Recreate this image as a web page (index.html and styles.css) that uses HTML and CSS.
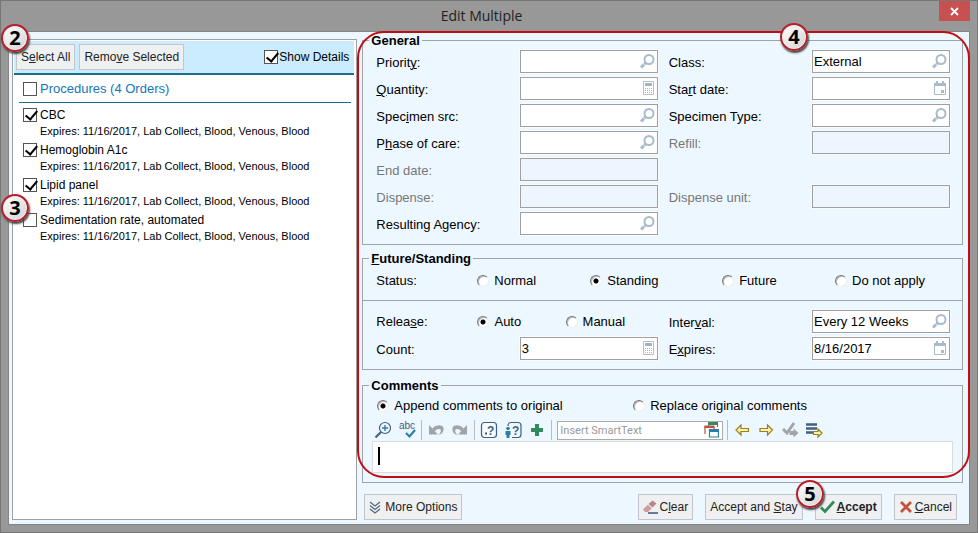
FILE: index.html
```html
<!DOCTYPE html>
<html lang="en">
<head>
<meta charset="utf-8">
<title>Edit Multiple</title>
<link rel="stylesheet" href="styles.css">
</head>
<body>
<svg class="defs" aria-hidden="true">
  <symbol id="search" viewBox="0 0 15 15"><circle cx="9" cy="5.5" r="4.500" fill="none" stroke="#a9bacb" stroke-width="2"/><path d="M5.800 8.800 1 13.500" stroke="#a9bacb" stroke-width="3" stroke-dasharray="2 .6 5"/></symbol>
  <symbol id="calc" viewBox="0 0 15 15"><path d="M3.5.5h10v13h-10z" fill="#fff" stroke="#b4bfc9"/><path d="M5 2h7v3H5z" fill="#a3b2c1"/><path d="M5 7.5h7M5 9.5h7M5 11.5h7" stroke="#a9b6c3" stroke-dasharray="1 1"/></symbol>
  <symbol id="calendar" viewBox="0 0 15 15"><path d="M2.5 3h11v10.500h-11z" fill="#fff" stroke="#a9bacb"/><path d="M2 2h12v3H2zM4 0h2v3H4zM10 0h2v3h-2zM9 9h3v3H9z" fill="#a9bacb"/></symbol>
</svg>
<main class="window">
  <header class="titlebar">
    <h1>Edit Multiple</h1>
    <button class="close" type="button" aria-label="Close"><svg width="9" height="9" viewBox="0 0 9 9"><path d="m1 1 7 7M8 1 1 8" stroke="#fff" stroke-width="1.800"/></svg></button>
  </header>
  <form class="content">
    <section class="orders">
      <div class="orders-bar">
        <button class="btn" type="button"><span>S<u>e</u>lect All</span></button>
        <button class="btn" type="button"><span>Remo<u>v</u>e Selected</span></button>
        <label class="details"><input type="checkbox" checked>Show Details</label>
      </div>
      <label class="group-head"><input type="checkbox">Procedures (4 Orders)</label>
      <ul class="order-list">
        <li><label><input type="checkbox" checked>CBC</label><p>Expires: 11/16/2017, Lab Collect, Blood, Venous, Blood</p></li>
        <li><label><input type="checkbox" checked>Hemoglobin A1c</label><p>Expires: 11/16/2017, Lab Collect, Blood, Venous, Blood</p></li>
        <li><label><input type="checkbox" checked>Lipid panel</label><p>Expires: 11/16/2017, Lab Collect, Blood, Venous, Blood</p></li>
        <li><label><input type="checkbox">Sedimentation rate, automated</label><p>Expires: 11/16/2017, Lab Collect, Blood, Venous, Blood</p></li>
      </ul>
    </section>
    <section class="settings">
      <fieldset class="general">
        <legend>General</legend>
        <div class="rows">
          <div class="row">
            <div class="field"><label for="priority">Priorit<u>y</u>:</label><span class="box"><input id="priority" type="text"><svg><use href="#search"/></svg></span></div>
            <div class="field"><label for="class">Class:</label><span class="box"><input id="class" type="text" value="External"><svg><use href="#search"/></svg></span></div>
          </div>
          <div class="row">
            <div class="field"><label for="quantity"><u>Q</u>uantity:</label><span class="box"><input id="quantity" type="text"><svg><use href="#calc"/></svg></span></div>
            <div class="field"><label for="start">Sta<u>r</u>t date:</label><span class="box"><input id="start" type="text"><svg><use href="#calendar"/></svg></span></div>
          </div>
          <div class="row">
            <div class="field"><label for="src">Spec<u>i</u>men src:</label><span class="box"><input id="src" type="text"><svg><use href="#search"/></svg></span></div>
            <div class="field"><label for="type">Specimen Type:</label><span class="box"><input id="type" type="text"><svg><use href="#search"/></svg></span></div>
          </div>
          <div class="row">
            <div class="field"><label for="phase">P<u>h</u>ase of care:</label><span class="box"><input id="phase" type="text"><svg><use href="#search"/></svg></span></div>
            <div class="field off"><label for="refill">Refill:</label><span class="box"><input id="refill" type="text" disabled></span></div>
          </div>
          <div class="row">
            <div class="field off"><label for="end">End date:</label><span class="box"><input id="end" type="text" disabled></span></div>
          </div>
          <div class="row">
            <div class="field off"><label for="dispense">Dispense:</label><span class="box"><input id="dispense" type="text" disabled></span></div>
            <div class="field off"><label for="unit">Dispense unit:</label><span class="box"><input id="unit" type="text" disabled></span></div>
          </div>
          <div class="row">
            <div class="field"><label for="agency">Resulting Agency:</label><span class="box"><input id="agency" type="text"><svg><use href="#search"/></svg></span></div>
          </div>
        </div>
      </fieldset>
      <fieldset class="future">
        <legend><u>F</u>uture/Standing</legend>
        <div class="status">
          <span>Status:</span>
          <label><input type="radio" name="status">Normal</label>
          <label><input type="radio" name="status" checked>Standing</label>
          <label><input type="radio" name="status">Future</label>
          <label><input type="radio" name="status">Do not apply</label>
        </div>
        <div class="rows release-rows">
          <div class="row">
            <div class="release">
              <span>Relea<u>s</u>e:</span>
              <label><input type="radio" name="release" checked>Auto</label>
              <label><input type="radio" name="release">Manual</label>
            </div>
            <div class="field"><label for="interval">Inter<u>v</u>al:</label><span class="box"><input id="interval" type="text" value="Every 12 Weeks"><svg><use href="#search"/></svg></span></div>
          </div>
          <div class="row">
            <div class="field"><label for="count">Count:</label><span class="box"><input id="count" type="text" value="3"><svg><use href="#calc"/></svg></span></div>
            <div class="field"><label for="expires">E<u>x</u>pires:</label><span class="box"><input id="expires" type="text" value="8/16/2017"><svg><use href="#calendar"/></svg></span></div>
          </div>
        </div>
      </fieldset>
      <fieldset class="comments">
        <legend>Comments</legend>
        <div class="modes">
          <label><input type="radio" name="mode" checked>Append comments to original</label>
          <label><input type="radio" name="mode">Replace original comments</label>
        </div>
        <div class="toolbar">
          <button type="button" aria-label="Zoom"><svg viewBox="0 0 18 18"><circle cx="11" cy="7" r="5.500" fill="none" stroke="#44607c" stroke-width="1.200"/><path d="M7 11 1.500 16.500" stroke="#44607c" stroke-width="2.200"/><path d="M11 4v6M8 7h6" stroke="#2b7fa6" stroke-width="1.400"/></svg></button>
          <button type="button" aria-label="Spelling"><svg viewBox="0 0 18 18"><text x="1" y="8" class="abc">abc</text><path d="m8 12 3.500 3.500L17 9" fill="none" stroke="#2b7fa6" stroke-width="2.200"/></svg></button>
          <i class="sep"></i>
          <button type="button" aria-label="Undo"><svg viewBox="0 0 18 18"><path d="M2 4v9.500h9L8 10.500c1-2.500 4-3 5.500-2C14.500 10 13.500 12 11.500 14c4-1 5.500-4 5-7C16 3.500 9 3 5.500 7.500z" fill="#a2a5a8"/></svg></button>
          <button type="button" aria-label="Redo"><svg viewBox="0 0 18 18"><path d="M16 4v9.500H7l3-3C9 8 6 7.500 4.500 8.500 3.500 10 4.500 12 6.500 14c-4-1-5.500-4-5-7C2 3.500 9 3 12.500 7.500z" fill="#a2a5a8"/></svg></button>
          <i class="sep"></i>
          <button type="button" aria-label="Next field"><svg viewBox="0 0 18 18"><rect x="1.500" y="1.500" width="15" height="15" rx="3" fill="#f5fbff" stroke="#44607c" stroke-width="1.200"/><path d="M5 11.500h2v2H5z" fill="#44607c"/><text x="7" y="13.500" class="mark">?</text></svg></button>
          <button type="button" aria-label="Personal field"><svg viewBox="0 0 18 18"><path d="M4 5V4.500a3 3 0 0 1 3-3h7a3 3 0 0 1 3 3v9a3 3 0 0 1-3 3H8" fill="none" stroke="#44607c" stroke-width="1.200"/><circle cx="4" cy="7.500" r="1.800" fill="#2b7fa6"/><path d="M1.500 10h5v4H5.500v3h-3v-3h-1z" fill="#2b7fa6"/><text x="8" y="13.500" class="mark">?</text></svg></button>
          <button type="button" aria-label="Add"><svg viewBox="0 0 18 18"><path d="M7 3h4v4h4v4h-4v4H7v-4H3V7h4z" fill="#358a5d"/></svg></button>
          <i class="sep"></i>
          <span class="smart"><input type="text" placeholder="Insert SmartText" aria-label="Insert SmartText"><svg viewBox="0 0 15 16"><path d="M4.500 4V1.500h9V5" fill="none" stroke="#358a5d"/><path d="M4 0h10v3H4z" fill="#358a5d"/><path d="M1 12V5h9v4" fill="#fff" stroke="#c4513b" stroke-width="1.200"/><path d="M.400 3.500h10v2.500h-10z" fill="#c4513b"/><path d="M5.500 7.500h9v7.500h-9z" fill="#fff" stroke="#2b7fa6" stroke-width="1.200"/><path d="M5 7h10v3H5z" fill="#2b7fa6"/></svg></span>
          <i class="sep"></i>
          <button type="button" aria-label="Previous"><svg viewBox="0 0 18 18"><path d="M3 9l5-5v3.500h7.500v3H8V14z" fill="#fff3a0" stroke="#97802a" stroke-width="1.200"/></svg></button>
          <button type="button" aria-label="Next"><svg viewBox="0 0 18 18"><path d="m15.500 9-5-5v3.500H3v3h7.500V14z" fill="#fff3a0" stroke="#97802a" stroke-width="1.200"/></svg></button>
          <button type="button" aria-label="Accept and next"><svg viewBox="0 0 18 18"><path d="m2 8 4 4 7-10" fill="none" stroke="#a2a5a8" stroke-width="3"/><path d="m17.500 12-5-4.500V10H8.500v4h4v2.500z" fill="#a2a5a8"/></svg></button>
          <button type="button" aria-label="Go to list"><svg viewBox="0 0 18 18"><path d="M1 3.500h11M1 7.500h11M1 11.500h7" stroke="#44607c" stroke-width="2.600"/><path d="m17 12-4-4v2.500H8.500v3H13V16z" fill="#fff3a0" stroke="#97802a" stroke-width="1.200"/></svg></button>
        </div>
        <div class="editor"><textarea aria-label="Comments" rows="1"></textarea><i class="caret"></i></div>
      </fieldset>
      <footer class="actions">
        <button class="btn more" type="button"><svg width="12" height="13" viewBox="0 0 12 13"><path d="m1 1 5 4 5-4M1 4.500l5 4 5-4M1 8l5 4 5-4" fill="none" stroke="#53687d" stroke-width="1.300"/></svg>More Options</button>
        <button class="btn" type="button"><svg width="15" height="14" viewBox="0 0 15 14"><path d="m9.500.5 4 3-4 4-4-3.500z" fill="#b9878b"/><path d="m4.800 4.800 4 3.400L5 12H2L0 9.500z" fill="#cf9ca0"/><path d="M5 13h10" stroke="#44607c" stroke-width="1.600"/></svg><span>C<u>l</u>ear</span></button>
        <button class="btn" type="button"><span>Accept and <u>S</u>tay</span></button>
        <button class="btn strong" type="button"><svg width="15" height="14" viewBox="0 0 15 14"><path d="m1 7.500 4 4L14 1.500" fill="none" stroke="#358a5d" stroke-width="2.800"/></svg><span><u>A</u>ccept</span></button>
        <button class="btn" type="button"><svg width="14" height="12" viewBox="0 0 14 12"><path d="m2 1 10 10M12 1 2 11" stroke="#c4513b" stroke-width="2.800"/></svg><span><u>C</u>ancel</span></button>
      </footer>
    </section>
    <div class="highlight"></div>
    <b class="step s2">2</b>
    <b class="step s3">3</b>
    <b class="step s4">4</b>
    <b class="step s5">5</b>
  </form>
</main>
</body>
</html>
```
FILE: styles.css
```css
* { box-sizing: border-box; }

body {
  margin: 0;
  font: 13px/15px "Liberation Sans", Arial, sans-serif;
  color: #000;
}

button, input, textarea { font: inherit; color: inherit; margin: 0; }
u { text-underline-offset: 1px; text-decoration-thickness: 1px; }
.defs { display: none; }

.window {
  display: flex;
  flex-direction: column;
  min-height: 100vh;
  padding: 0 7px 7px;
  background: #989898;
  border: 1px solid #777;
}

.titlebar {
  display: flex;
  justify-content: space-between;
  height: 30px;
}
.titlebar h1 {
  flex: 1;
  margin: 0;
  padding-left: 16px;
  font: 14px/30px "Open Sans", "Liberation Sans", sans-serif;
  text-align: center;
  color: #222;
}
.close {
  width: 31px;
  height: 20px;
  padding: 0;
  border: 0;
  background: #c75050;
}

.content {
  position: relative;
  flex: 1;
  display: grid;
  grid-template-columns: 23fr 40fr;
  gap: 5px;
  padding: 1px 6px 4px 3px;
  background: #edf7ff;
  border: 1px solid #858585;
}

/* Orders list */
.orders {
  margin-top: 6px;
  padding: 1px 2px 0 1px;
  background: #fff;
  border: 1px solid #a0a0a0;
}
.orders-bar {
  display: flex;
  align-items: center;
  gap: 4px;
  height: 34px;
  padding: 0 5px 0 2px;
  background: #cbecff;
  border-bottom: 2px solid #1c6c8e;
  font-size: 12px;
}
.btn {
  display: inline-flex;
  align-items: center;
  justify-content: center;
  gap: 2px;
  height: 26px;
  padding: 0 4px;
  background: #eff0f2;
  border: 1px solid #c3c5ca;
  font-size: 12px;
  color: #222;
  white-space: pre;
}
.details {
  display: flex;
  align-items: center;
  gap: 1px;
  margin-left: auto;
}

input[type="checkbox"] {
  appearance: none;
  flex: none;
  width: 14px;
  height: 14px;
  background: #fff;
  border: 1px solid #555;
}
input[type="checkbox"]:checked::after {
  content: "";
  display: block;
  width: 5px;
  height: 10px;
  margin: -1px 0 0 4px;
  border: solid #000;
  border-width: 0 2px 2px 0;
  transform: rotate(40deg);
}

.group-head {
  display: flex;
  align-items: center;
  gap: 3px;
  height: 28px;
  margin: 0 3px 0 5px;
  padding-left: 4px;
  border-bottom: 1px solid #1c6c8e;
  color: #1476b8;
}
.order-list {
  margin: 0;
  padding: 3px 9px;
  list-style: none;
}
.order-list li { height: 35px; }
.order-list label {
  display: flex;
  align-items: center;
  gap: 3px;
  height: 18px;
  font-size: 12px;
}
.order-list p {
  margin: 0 0 0 17px;
  font-size: 11px;
  line-height: 14px;
  white-space: nowrap;
}

/* Settings */
.settings {
  display: flex;
  flex-direction: column;
}
fieldset {
  min-width: 0;
  margin: 0;
  border: 1px solid #a0a4a8;
}
legend {
  padding: 0 2px;
  font-weight: bold;
}
.general { padding: 2px 12px 9px 13px; }
.general legend { margin-left: -7px; }
.future { margin-top: 6px; padding: 3px 0 9px; }
.future legend { margin-left: 6px; }
.comments { margin-top: 8px; padding: 1px 9px 9px; }
.comments legend { margin-left: -3px; }

.rows { display: grid; gap: 4px; }
.row {
  display: grid;
  grid-template-columns: 1fr 1fr;
  gap: 11px;
  height: 23px;
}
.field { display: flex; align-items: center; }
.field label { flex: 1; padding-top: 2px; }
.off { color: #777; }
.box {
  display: flex;
  align-items: center;
  width: 138px;
  height: 23px;
  padding-right: 2px;
  background: #fff;
  border: 1px solid #a0a0a0;
  box-shadow: 0 0 0 1px #f8fcff;
}
.off .box { background: #edf6ff; }
.box input {
  flex: 1;
  min-width: 0;
  padding: 0 1px;
  background: none;
  border: 0;
  outline: 0;
}
.box svg { width: 15px; height: 15px; }

input[type="radio"] {
  appearance: none;
  flex: none;
  width: 12px;
  height: 12px;
  background: #fff;
  border: 1px solid;
  border-color: #777 #eee #eee #777;
  border-radius: 50%;
  box-shadow: inset 1px 1px 0 #bbb;
}
input[type="radio"]:checked {
  background: radial-gradient(circle, #000 2px, #fff 3px);
}
.status, .release, .modes {
  display: grid;
  align-items: center;
  height: 23px;
}
.status label, .release label, .modes label {
  display: flex;
  align-items: center;
  gap: 5px;
}
.status {
  grid-template-columns: 101fr 113fr 132fr 113fr 115fr;
  margin: 0 12px 0 13px;
}
.release { grid-template-columns: 101fr 88fr 92fr; }
.release-rows {
  margin-top: 8px;
  padding: 9px 12px 0 13px;
  border-top: 1px solid #a0a4a8;
}
.modes {
  grid-template-columns: 4fr 5fr;
  padding-left: 5px;
}

.toolbar {
  display: flex;
  align-items: center;
  gap: 2px;
  margin-top: 3px;
  height: 20px;
}
.toolbar button {
  width: 22px;
  height: 20px;
  padding: 0;
  border: 0;
  background: none;
}
.toolbar button svg { display: block; width: 18px; height: 18px; margin: auto; }
.sep { width: 1px; height: 20px; margin: 0 1px; background: #b8bcc0; }
.abc { font: 10px "Liberation Sans", Arial, sans-serif; fill: #44607c; }
.mark { font: bold 12px "Liberation Sans", Arial, sans-serif; fill: #44607c; }
.smart {
  display: flex;
  align-items: center;
  width: 166px;
  height: 19px;
  margin: 0 1px 0 2px;
  padding: 0 3px 0 2px;
  background: #fff;
  border: 1px solid #aaa;
}
.smart input {
  flex: 1;
  min-width: 0;
  padding: 0;
  background: none;
  border: 0;
  font: 11px Roboto, "Liberation Sans", sans-serif;
}
.smart input::placeholder { color: #999; }
.smart svg { width: 15px; height: 16px; }
.editor { position: relative; display: flex; margin-top: 1px; }
.editor textarea {
  flex: 1;
  height: 32px;
  padding: 6px;
  background: #fff;
  border: 1px solid #d8dde2;
  resize: none;
}
.caret {
  position: absolute;
  left: 6px;
  top: 6px;
  width: 2px;
  height: 18px;
  background: #000;
}

.actions {
  display: flex;
  gap: 12px;
  margin-top: auto;
  padding: 0 6px 0 2px;
}
.more { margin-right: auto; gap: 4px; }
.strong { font-weight: bold; }

/* Numbered callouts over the dialog */
.highlight {
  position: absolute;
  top: -1px;
  bottom: 46px;
  left: 348px;
  right: -1px;
  border: 2px solid #c00d14;
  border-radius: 27px;
  pointer-events: none;
}
.step {
  position: absolute;
  width: 28px;
  height: 28px;
  border: 2px solid #b51f2b;
  border-radius: 50%;
  background: linear-gradient(135deg, #fff, #d2d2d2);
  box-shadow: 1px 2px 2px #444, inset 0 0 0 1px #eee;
  font: bold 20px/23px "Noto Sans", "Open Sans", sans-serif;
  text-align: center;
}
.s2 { left: -8px; top: -8px; }
.s3 { left: -8px; top: 162px; }
.s4 { right: 161px; top: -9px; }
.s5 { right: 145px; bottom: 16px; }
```
